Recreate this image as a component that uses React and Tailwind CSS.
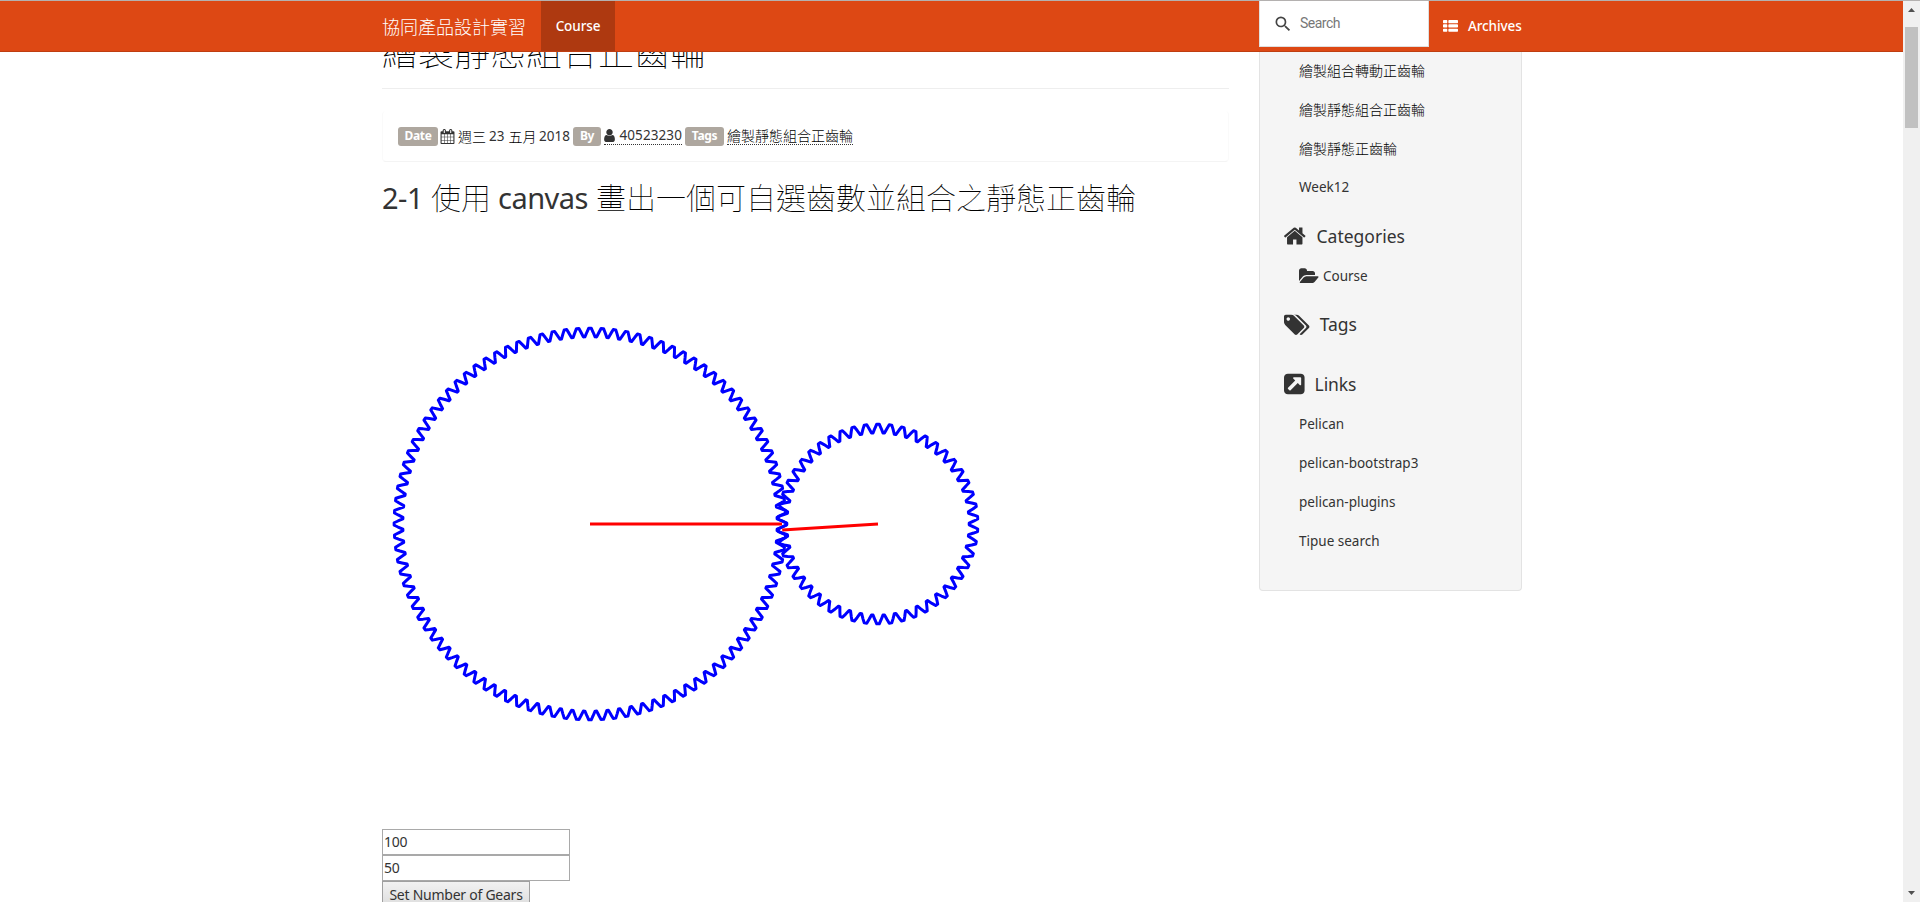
import React from 'react';
import { MdSearch } from 'react-icons/md';

const ICONS = {
  list: 'M512 1248v192q0 40-28 68t-68 28h-320q-40 0-68-28t-28-68v-192q0-40 28-68t68-28h320q40 0 68 28t28 68zm0-512v192q0 40-28 68t-68 28h-320q-40 0-68-28t-28-68v-192q0-40 28-68t68-28h320q40 0 68 28t28 68zm1280 512v192q0 40-28 68t-68 28h-960q-40 0-68-28t-28-68v-192q0-40 28-68t68-28h960q40 0 68 28t28 68zm-1280-1024v192q0 40-28 68t-68 28h-320q-40 0-68-28t-28-68v-192q0-40 28-68t68-28h320q40 0 68 28t28 68zm1280 512v192q0 40-28 68t-68 28h-960q-40 0-68-28t-28-68v-192q0-40 28-68t68-28h960q40 0 68 28t28 68zm0-512v192q0 40-28 68t-68 28h-960q-40 0-68-28t-28-68v-192q0-40 28-68t68-28h960q40 0 68 28t28 68z',
  home: 'M1472 992v480q0 26-19 45t-45 19h-384v-384h-256v384h-384q-26 0-45-19t-19-45v-480q0-1 .5-3t.5-3l575-474 575 474q1 2 1 6zm223-69l-62 74q-8 9-21 11h-3q-13 0-21-7l-692-577-692 577q-12 8-24 7-13-2-21-11l-62-74q-8-10-7-23.5t11-21.5l719-599q32-26 76-26t76 26l244 204v-195q0-14 9-23t23-9h192q14 0 23 9t9 23v408l219 182q10 8 11 21.5t-7 23.5z',
  calendar: 'M192 1664h288v-288h-288v288zm352 0h320v-288h-320v288zm-352-352h288v-320h-288v320zm352 0h320v-320h-320v320zm-352-384h288v-288h-288v288zm736 736h320v-288h-320v288zm-384-736h320v-288h-320v288zm768 736h288v-288h-288v288zm-384-352h320v-320h-320v320zm-352-864v-288q0-13-9.5-22.5t-22.5-9.5h-64q-13 0-22.5 9.5t-9.5 22.5v288q0 13 9.5 22.5t22.5 9.5h64q13 0 22.5-9.5t9.5-22.5zm736 864h288v-320h-288v320zm-384-384h320v-288h-320v288zm384 0h288v-288h-288v288zm32-480v-288q0-13-9.5-22.5t-22.5-9.5h-64q-13 0-22.5 9.5t-9.5 22.5v288q0 13 9.5 22.5t22.5 9.5h64q13 0 22.5-9.5t9.5-22.5zm384-64v1280q0 52-38 90t-90 38h-1408q-52 0-90-38t-38-90v-1280q0-52 38-90t90-38h128v-96q0-66 47-113t113-47h64q66 0 113 47t47 113v96h384v-96q0-66 47-113t113-47h64q66 0 113 47t47 113v96h128q52 0 90 38t38 90z',
  user: 'M1536 1399q0 109-62.5 187t-150.5 78h-854q-88 0-150.5-78t-62.5-187q0-85 8.5-160.5t31.5-152 58.5-131 94-89 134.5-34.5q131 128 313 128t313-128q76 0 134.5 34.5t94 89 58.5 131 31.5 152 8.5 160.5zm-256-887q0 159-112.5 271.5t-271.5 112.5-271.5-112.5-112.5-271.5 112.5-271.5 271.5-112.5 271.5 112.5 112.5 271.5z',
  folder: 'M1879 952q0 31-31 66l-336 396q-43 51-120.5 86.5t-143.5 35.5h-1088q-34 0-60.5-13t-26.5-43q0-31 31-66l336-396q43-51 120.5-86.5t143.5-35.5h1088q34 0 60.5 13t26.5 43zm-343-344v160h-832q-94 0-197 47.5t-164 119.5l-337 396-5 6q0-4-.5-12.5t-.5-12.5v-960q0-92 66-158t158-66h320q92 0 158 66t66 158v32h544q92 0 158 66t66 158z',
  tags: 'M448 448q0-53-37.5-90.5t-90.5-37.5-90.5 37.5-37.5 90.5 37.5 90.5 90.5 37.5 90.5-37.5 37.5-90.5zm1067 576q0 53-37 90l-491 492q-39 37-91 37-53 0-90-37l-715-716q-38-37-64.5-101t-26.5-117v-416q0-52 38-90t90-38h416q53 0 117 26.5t102 64.5l715 714q37 39 37 91zm384 0q0 53-37 90l-491 492q-39 37-91 37-36 0-59-14t-53-45l470-470q37-37 37-90 0-52-37-91l-715-714q-38-38-102-64.5t-117-26.5h224q53 0 117 26.5t102 64.5l715 714q37 39 37 91z',
  external: 'M1408 928v-480q0-26-19-45t-45-19h-480q-42 0-59 39-17 41 14 70l144 144-534 534q-19 19-19 45t19 45l102 102q19 19 45 19t45-19l534-534 144 144q18 19 45 19 12 0 25-5 39-17 39-59zm256-512v960q0 119-84.5 203.5t-203.5 84.5h-960q-119 0-203.5-84.5t-84.5-203.5v-960q0-119 84.5-203.5t203.5-84.5h960q119 0 203.5 84.5t84.5 203.5z',
};

function Icon({ name, box = '0 0 1792 1792', className }) {
  return (
    <svg viewBox={box} className={'shrink-0 ' + className} fill="currentColor" aria-hidden="true">
      <path d={ICONS[name]} />
    </svg>
  );
}

// Outline of a spur gear: root, pitch and tip points on both flanks of each tooth.
function gearPath(cx, cy, teeth, module, start) {
  const pitch = (teeth * module) / 2;
  const profile = [
    [-1.36, -1.25],
    [-0.785, 0],
    [-0.32, 1],
    [0.32, 1],
    [0.785, 0],
    [1.36, -1.25],
  ];
  const points = [];
  for (let i = 0; i < teeth; i++) {
    const mid = start + (i * 2 * Math.PI) / teeth;
    for (const [along, out] of profile) {
      const angle = mid + (along * module) / pitch;
      const r = pitch + out * module;
      points.push((cx + r * Math.cos(angle)).toFixed(2) + ' ' + (cy + r * Math.sin(angle)).toFixed(2));
    }
  }
  return 'M' + points.join('L') + 'Z';
}

const GEAR_A = gearPath(208, 300, 100, 3.84, 0);
const GEAR_B = gearPath(496, 300, 50, 3.84, Math.PI / 50);

function Badge({ children, className }) {
  return (
    <span className={'flex h-[19px] items-center justify-center rounded-[3px] bg-[#aea79f] text-[12px] font-bold tracking-[-0.3px] text-white ' + className}>
      {children}
    </span>
  );
}

function SideItem({ children }) {
  return <li className="flex h-[39px] items-center pl-[39px] text-[13.5px]">{children}</li>;
}

export default function App() {
  return (
    <div className="flex h-[902px] w-[1920px] overflow-hidden bg-white font-['Noto_Sans','Noto_Sans_CJK_TC',sans-serif] text-[#333]">
      <div className="flex w-[1903px] flex-col">
        <header className="z-10 flex h-[52px] shrink-0 border-t border-b border-t-[#b4b1b0] border-b-[#bf3e11] bg-[#dd4814] pl-[382px] text-white">
          <a className="flex w-[159px] items-center font-['Noto_Sans_CJK_TC',sans-serif] text-[18px] font-light">協同產品設計實習</a>
          <a className="flex w-[74px] items-center justify-center bg-[#ae3910] text-[13.5px] font-medium tracking-[-0.1px]">Course</a>
          <div className="ml-[644px] flex h-[46px] w-[170px] items-center border border-t-0 border-[#dfdfdf] bg-white pl-[13px]">
            <MdSearch className="size-5 text-[#444]" />
            <span className="ml-[7px] font-[Roboto,sans-serif] text-[14px] tracking-[-0.5px] text-[#777]">Search</span>
          </div>
          <a className="ml-[14px] flex items-center text-[13.5px] font-medium">
            <Icon name="list" className="size-[15px]" />
            <span className="ml-[10px] tracking-[-0.1px]">Archives</span>
          </a>
        </header>

        <div className="flex min-h-0 flex-1 items-start gap-[30px] pl-[382px]">
          <main className="w-[847px]">
            <h1 className="-mt-[26px] h-[62px] font-['Noto_Sans_CJK_TC',sans-serif] text-[36px] leading-[48px] font-thin text-black">繪製靜態組合正齒輪</h1>
            <hr className="h-px border-0 bg-[#eeeeee]" />
            <div className="mt-[22px] flex h-[51px] items-center rounded-[4px] border border-t-0 border-x-[#fafafa] border-b-[#f4f4f4] pl-[15px] text-[13.5px]">
              <Badge className="w-10">Date</Badge>
              <Icon name="calendar" className="ml-[2px] size-[15px]" />
              <span className="ml-[3px] flex w-[112px] items-center whitespace-nowrap">
                <span className="mr-[3px] text-[14px] font-light text-black">週三</span>
                <span>23</span>
                <span className="mr-auto ml-1 text-[14px] font-light text-black">五月</span>
                <span>2018</span>
              </span>
              <Badge className="ml-[3px] w-7">By</Badge>
              <a className="ml-[3px] flex h-[18px] w-[78px] items-center justify-between border-b border-dotted border-[#333]">
                <Icon name="user" box="256 0 1280 1792" className="h-[15px] w-[11px]" />
                <span className="tracking-[0.1px]">40523230</span>
              </a>
              <Badge className="ml-[3px] w-[39px]">Tags</Badge>
              <a className="ml-[3px] flex h-[18px] items-center border-b border-dotted border-[#333] text-[14px] font-light text-black">繪製靜態組合正齒輪</a>
            </div>
            <h2 className="mt-[12px] flex h-[50px] items-start text-[29px] leading-[48px] font-thin whitespace-nowrap">
              <span className="w-[49px] font-normal tracking-[-0.5px]">2-1</span>
              <span className="w-[67px] text-[30px] text-black">使用</span>
              <span className="w-[98px] font-normal tracking-[-0.5px]">canvas</span>
              <span className="text-[30px] text-black">畫出一個可自選齒數並組合之靜態正齒輪</span>
            </h2>
            <svg viewBox="0 0 800 605" className="block h-[605px] w-[800px]" fill="none">
              <g stroke="#0000ff" strokeWidth="3" strokeLinejoin="round">
                <path d={GEAR_A} />
                <path d={GEAR_B} />
              </g>
              <path d="M208 300H400M496 300L400.2 306" stroke="#ff0000" strokeWidth="3" />
            </svg>
            <div className="flex flex-col items-start text-[14px]">
              <div className="flex h-[26px] w-[188px] items-center border border-[#a9a9a9] pb-[2px] pl-px tracking-[-0.3px]">100</div>
              <div className="flex h-[26px] w-[188px] items-center border border-[#a9a9a9] pb-[2px] pl-px tracking-[-0.3px]">50</div>
              <button className="h-[26px] w-[148px] border border-[#a0a0a0] bg-linear-to-b from-[#f2f2f2] to-[#dddddd] tracking-[-0.25px] whitespace-nowrap">
                Set Number of Gears
              </button>
            </div>
          </main>

          <aside className="h-[539px] w-[263px] rounded-b-[4px] border border-t-0 border-[#e3e3e3] bg-[#f5f5f5]">
            <ul className="-mt-px">
              <SideItem><span className="text-[14px] font-light text-black">繪製組合轉動正齒輪</span></SideItem>
              <SideItem><span className="text-[14px] font-light text-black">繪製靜態組合正齒輪</span></SideItem>
              <SideItem><span className="text-[14px] font-light text-black">繪製靜態正齒輪</span></SideItem>
              <SideItem>Week12</SideItem>
              <li className="flex h-[50px] items-center pt-2 pl-6 text-[17.5px]">
                <Icon name="home" box="96 0 1600 1792" className="h-6 w-[21.5px]" />
                <span className="ml-[11px]">Categories</span>
              </li>
              <SideItem>
                <Icon name="folder" box="0 0 1920 1792" className="h-[18.7px] w-5" />
                <span className="ml-[4px]">Course</span>
              </SideItem>
              <li className="flex h-[57px] items-center pl-6 text-[17.5px]">
                <Icon name="tags" box="0 0 1920 1792" className="h-6 w-[25.7px]" />
                <span className="ml-[10px]">Tags</span>
              </li>
              <li className="flex h-[52px] items-center pt-[10px] pl-6 text-[17.5px]">
                <Icon name="external" box="128 0 1536 1792" className="h-6 w-[20.6px]" />
                <span className="ml-[10px] tracking-[-0.1px]">Links</span>
              </li>
              <SideItem>Pelican</SideItem>
              <SideItem>pelican-bootstrap3</SideItem>
              <SideItem>pelican-plugins</SideItem>
              <SideItem>Tipue search</SideItem>
            </ul>
          </aside>
        </div>
      </div>

      <div className="flex w-[17px] flex-col items-center border-t border-[#b4b1b0] bg-[#f0f0f0]">
        <svg viewBox="0 0 17 26" className="h-[26px] w-[17px] shrink-0" fill="#505050"><path d="M5 11L8.500 7L12 11Z" /></svg>
        <div className="h-[101px] w-[13px] shrink-0 bg-[#c1c1c1]" />
        <svg viewBox="0 0 17 17" className="mt-auto h-[17px] w-[17px] shrink-0" fill="#505050"><path d="M5 6L8.500 10L12 6Z" /></svg>
      </div>
    </div>
  );
}
